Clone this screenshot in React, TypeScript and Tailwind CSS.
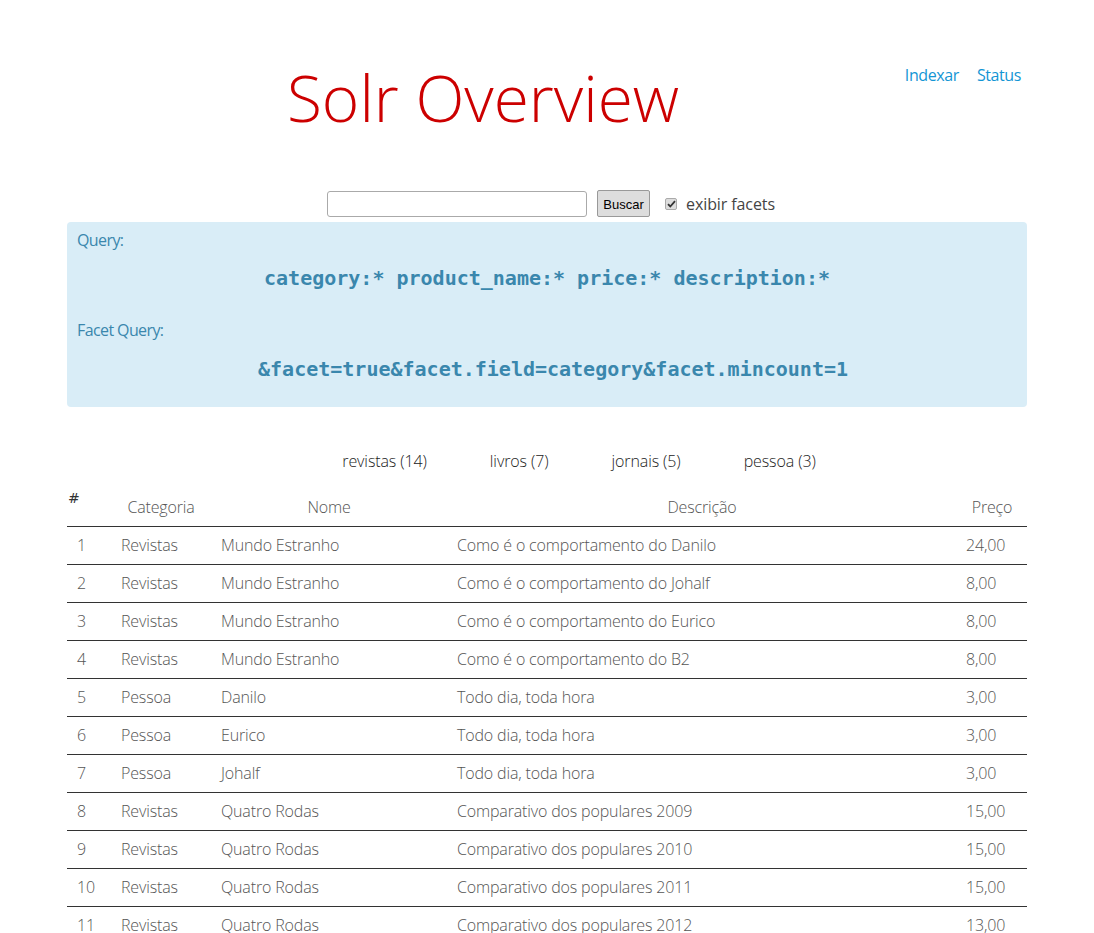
import { useState } from "react";

const rows = [
  { cat: "Revistas", nome: "Mundo Estranho", desc: "Como é o comportamento do Danilo", preco: "24,00" },
  { cat: "Revistas", nome: "Mundo Estranho", desc: "Como é o comportamento do Johalf", preco: "8,00" },
  { cat: "Revistas", nome: "Mundo Estranho", desc: "Como é o comportamento do Eurico", preco: "8,00" },
  { cat: "Revistas", nome: "Mundo Estranho", desc: "Como é o comportamento do B2", preco: "8,00" },
  { cat: "Pessoa", nome: "Danilo", desc: "Todo dia, toda hora", preco: "3,00" },
  { cat: "Pessoa", nome: "Eurico", desc: "Todo dia, toda hora", preco: "3,00" },
  { cat: "Pessoa", nome: "Johalf", desc: "Todo dia, toda hora", preco: "3,00" },
  { cat: "Revistas", nome: "Quatro Rodas", desc: "Comparativo dos populares 2009", preco: "15,00" },
  { cat: "Revistas", nome: "Quatro Rodas", desc: "Comparativo dos populares 2010", preco: "15,00" },
  { cat: "Revistas", nome: "Quatro Rodas", desc: "Comparativo dos populares 2011", preco: "15,00" },
  { cat: "Revistas", nome: "Quatro Rodas", desc: "Comparativo dos populares 2012", preco: "13,00" },
];

const facets = ["revistas (14)", "livros (7)", "jornais (5)", "pessoa (3)"];

export default function App() {
  const [showFacets, setShowFacets] = useState(true);

  return (
    <div className="min-h-screen bg-white font-['Open_Sans',sans-serif] font-light text-[#555]">
      <div className="mx-auto w-[960px]">
        {/* Header */}
        <div className="flex pt-[58px]">
          <h1 className="w-[832px] text-center text-[64px] leading-[80px] font-light text-[#cc0000]">
            Solr Overview
          </h1>
          <div className="flex flex-1 justify-end gap-[18px] pr-[6px] pt-[4px] text-[16px] leading-[26px] font-normal tracking-[-0.4px] text-[#1395d4]">
            <a href="#">Indexar</a>
            <a href="#">Status</a>
          </div>
        </div>

        {/* Search */}
        <div className="mt-[52px] ml-[8px] flex h-[27px] items-center justify-center gap-[10px]">
          <input
            type="text"
            className="h-[26px] w-[260px] rounded-[3px] border border-[#aaa] bg-white px-1"
          />
          <button className="h-[27px] w-[53px] rounded-[2px] border border-[#999] bg-[#ddd] pt-[2px] font-['Liberation_Sans',sans-serif] text-[13px] font-normal text-black">
            Buscar
          </button>
          <label className="ml-[5px] flex items-center gap-[9px] text-[16px] font-normal tracking-[-0.1px] text-[#444]">
            <span
              onClick={() => setShowFacets(!showFacets)}
              className="flex h-[12px] w-[12px] items-center justify-center rounded-[2px] border border-[#aaa] bg-[#ddd]"
            >
              {showFacets && <CheckIcon />}
            </span>
            exibir facets
          </label>
        </div>

        {/* Query box */}
        <div className="mt-[5px] rounded-[4px] bg-[#d9edf7] px-[10px] pt-[8px] pb-[24px] text-[#3a87ad]">
          <div className="text-[16px] leading-[20px] font-normal tracking-[-0.6px]">Query:</div>
          <div className="mt-[14px] text-center font-['DejaVu_Sans_Mono',monospace] text-[20px] leading-[28px] font-bold">
            category:* product_name:* price:* description:*
          </div>
          <div className="mt-[28px] text-[16px] leading-[20px] font-normal tracking-[-0.6px]">Facet Query:</div>
          <div className="mt-[15px] text-center font-['DejaVu_Sans_Mono',monospace] text-[20px] leading-[28px] font-bold">
            {"\u00a0"}&amp;facet=true&amp;facet.field=category&amp;facet.mincount=1
          </div>
        </div>

        {/* Facets */}
        <div className="mt-[43px] flex justify-center gap-[63px] pl-[64px] text-[16px] leading-[22px] font-light text-[#222]">
          {facets.map((f) => (
            <a key={f} href="#" className="tracking-[-0.1px]">
              {f}
            </a>
          ))}
        </div>

        {/* Results */}
        <table className="mt-[16px] w-full table-fixed border-collapse text-[16px] tracking-[-0.15px]">
          <colgroup>
            <col className="w-[44px]" />
            <col className="w-[100px]" />
            <col className="w-[236px]" />
            <col className="w-[510px]" />
            <col className="w-[70px]" />
          </colgroup>
          <thead>
            <tr className="border-b border-[#333]">
              <th className="h-[38px] pl-[1px] text-left align-top font-['DejaVu_Sans',sans-serif] text-[14px] leading-[20px] font-normal text-[#333]">
                #
              </th>
              <th className="pb-[8px] text-center align-bottom leading-[22px] font-light">Categoria</th>
              <th className="pb-[8px] text-center align-bottom leading-[22px] font-light">Nome</th>
              <th className="pb-[8px] text-center align-bottom leading-[22px] font-light">Descrição</th>
              <th className="pb-[8px] text-center align-bottom leading-[22px] font-light">Preço</th>
            </tr>
          </thead>
          <tbody>
            {rows.map((r, i) => (
              <tr key={i} className="h-[38px] border-b border-[#333]">
                <td className="pl-[10px]">{i + 1}</td>
                <td className="pl-[10px]">{r.cat}</td>
                <td className="pl-[10px]">{r.nome}</td>
                <td className="pl-[10px]">{r.desc}</td>
                <td className="pl-[9px]">{r.preco}</td>
              </tr>
            ))}
          </tbody>
        </table>
      </div>
    </div>
  );
}

function CheckIcon() {
  return (
    <svg width="9" height="8" viewBox="0 0 9 8" fill="none">
      <path d="M1 4.2l2.3 2.3L8 1.2" stroke="#333" strokeWidth="1.8" />
    </svg>
  );
}
